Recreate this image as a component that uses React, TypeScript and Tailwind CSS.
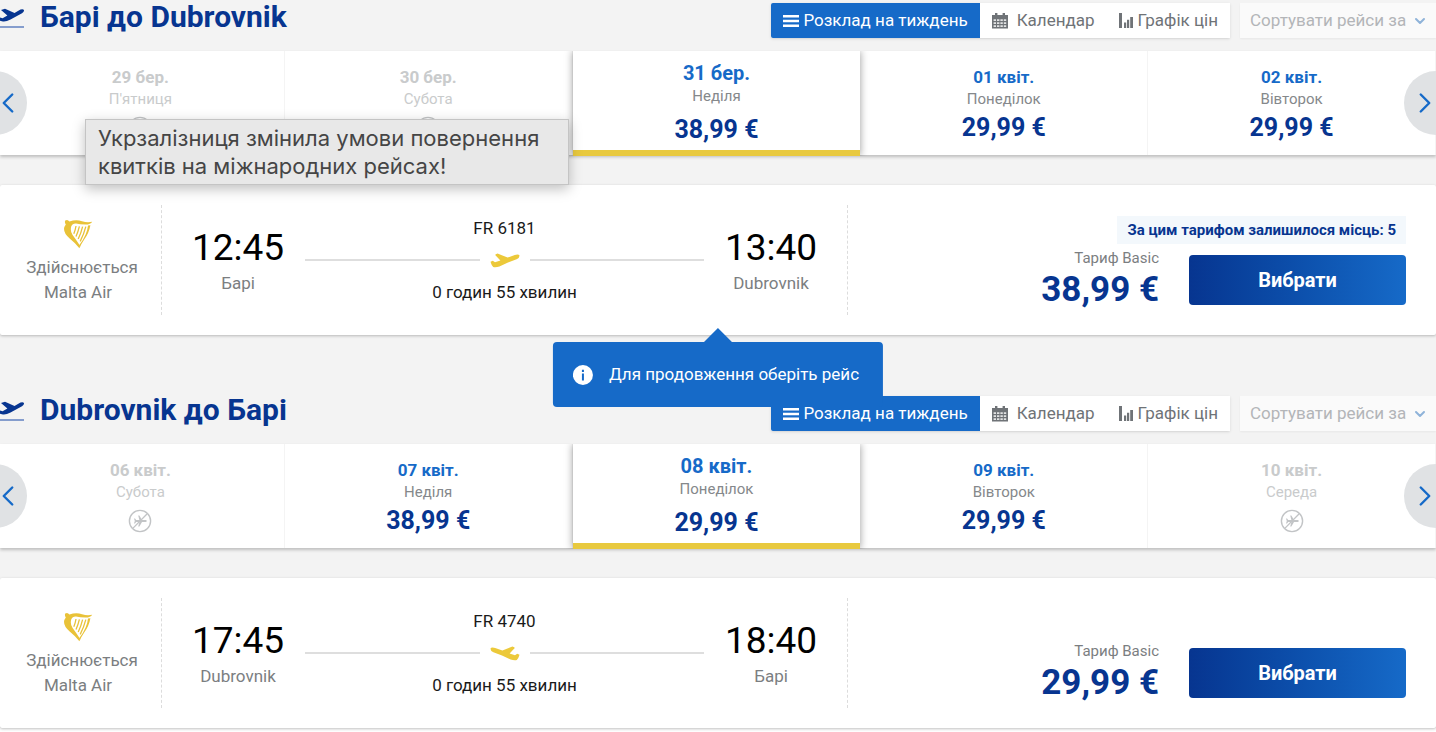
import { useState } from "react";
import { ChevronLeft, ChevronRight, ChevronDown } from "lucide-react";

interface Day {
  date: string;
  weekday: string;
  price?: string;
}

interface Flight {
  from: string;
  to: string;
  departure: string;
  arrival: string;
  number: string;
  duration: string;
  price: string;
  seatsLeft?: number;
  direction: "outbound" | "inbound";
}

const outboundDays: Day[] = [
  { date: "29 бер.", weekday: "П'ятниця" },
  { date: "30 бер.", weekday: "Субота" },
  { date: "31 бер.", weekday: "Неділя", price: "38,99 €" },
  { date: "01 квіт.", weekday: "Понеділок", price: "29,99 €" },
  { date: "02 квіт.", weekday: "Вівторок", price: "29,99 €" },
];

const inboundDays: Day[] = [
  { date: "06 квіт.", weekday: "Субота" },
  { date: "07 квіт.", weekday: "Неділя", price: "38,99 €" },
  { date: "08 квіт.", weekday: "Понеділок", price: "29,99 €" },
  { date: "09 квіт.", weekday: "Вівторок", price: "29,99 €" },
  { date: "10 квіт.", weekday: "Середа" },
];

const outboundFlight: Flight = {
  from: "Барі",
  to: "Dubrovnik",
  departure: "12:45",
  arrival: "13:40",
  number: "FR 6181",
  duration: "0 годин 55 хвилин",
  price: "38,99 €",
  seatsLeft: 5,
  direction: "outbound",
};

const inboundFlight: Flight = {
  from: "Dubrovnik",
  to: "Барі",
  departure: "17:45",
  arrival: "18:40",
  number: "FR 4740",
  duration: "0 годин 55 хвилин",
  price: "29,99 €",
  direction: "inbound",
};

function TakeoffIcon() {
  return (
    <svg viewBox="0 0 24 32" className="w-6 h-8 shrink-0" aria-hidden="true">
      <path
        d="M1 10 5 8.8 14.5 13 20.5 9.6Q23.4 8.8 24 10.2 24.2 11.8 22 13.2L10.5 19.6Q6 21.8 3 21.4L0 20.8V17.4L2.6 18.2 7.4 15.6Z"
        fill="#073590"
      />
      <path d="M0 27H24" stroke="#4a6fb8" strokeWidth="1.3" />
    </svg>
  );
}

function PlaneIcon({ flipped }: { flipped: boolean }) {
  return (
    <svg
      viewBox="0 0 30 15"
      className={`w-[30px] h-[15px] shrink-0 ${flipped ? "-scale-x-100" : ""}`}
      aria-hidden="true"
    >
      <path
        d="M.5 8.8 2.8 7.8 5 9.2 10.4 7.4 5.2 2.1Q5.2 1.2 7.6.6L17.6 4.6 24.8 2Q28.8 1 29.5 2.6 29.6 5 26.6 6.3L18 9.6 9.4 13.4Q6 14.6 3.2 14 1.6 12.8.5 8.8Z"
        fill="#ecc93a"
      />
    </svg>
  );
}

function HarpIcon() {
  return (
    <svg viewBox="0 0 30 30" className="w-[30px] h-[30px]" aria-hidden="true">
      <path
        d="M2.2 1.6Q4.6-.2 6.4 2.6 13 .2 19 2.2 24 4 29.2 2.8 27.6 5.6 22.6 5.6 17 5.4 13 4.4 9.4 4.2 8.2 7.4 7 12.4 9.6 16 13.8 21.6 17 26.8L16.4 29.2Q11 22.8 6.4 19.2 1 14.6 1 9.8 1.2 7.4 2.8 5.4 1.4 3.6 2.2 1.6Z"
        fill="#e9c238"
      />
      <path d="M27.4 6.2Q26 14 21.4 20.2 18.4 24.4 16.6 29L16 26.4Q20 21.4 22.6 15.4 24.6 11 25 6.6Z" fill="#e9c238" />
      <path
        d="M13 7Q12.4 11 10.8 14.8M16.4 7.4Q15.2 12.4 13 17.6M19.6 7.6Q18.2 13.6 15.2 20M22.8 7.6Q21 14.8 17.2 22.4"
        fill="none"
        stroke="#e9c238"
        strokeWidth="1.3"
      />
    </svg>
  );
}

function NoFlightIcon() {
  return (
    <svg viewBox="0 0 24 24" className="w-6 h-6" fill="none" stroke="#c2c4c6" aria-hidden="true">
      <circle cx="12" cy="12" r="10.6" strokeWidth="1.4" />
      <path d="M4.8 19.4 19.2 4.8" strokeWidth="1.3" />
      <path
        d="M18.8 12Q18.8 11 17.4 11H14L11.4 6.6H10.2L11.4 11H8.2L7 9.6H6L6.8 12 6 14.4H7L8.2 13H11.4L10.2 17.4H11.4L14 13H17.4Q18.8 13 18.8 12Z"
        fill="#c2c4c6"
        stroke="none"
      />
    </svg>
  );
}

function ListIcon() {
  return (
    <svg viewBox="0 0 16 14" className="w-4 h-[14px]" fill="currentColor" aria-hidden="true">
      <path d="M0 1h16v2.4H0zM0 5.8h16v2.4H0zM0 10.6h16V13H0z" />
    </svg>
  );
}

function CalendarIcon() {
  return (
    <svg viewBox="0 0 16 16" className="w-4 h-4" aria-hidden="true">
      <path d="M0 2H3V0H5.4V2H10.6V0H13V2H16V15.4H0Z" fill="currentColor" />
      <path
        d="M1.6 6.2h2.4v1.8H1.6zM5 6.2h2.4v1.8H5zM8.4 6.2h2.4v1.8H8.4zM11.8 6.2h2.4v1.8h-2.4zM1.6 9.2h2.4V11H1.6zM5 9.2h2.4V11H5zM8.4 9.2h2.4V11H8.4zM11.8 9.2h2.4V11h-2.4zM1.6 12.2h2.4V14H1.6zM5 12.2h2.4V14H5zM8.4 12.2h2.4V14H8.4zM11.8 12.2h2.4V14h-2.4z"
        fill="#fff"
        fillOpacity="0.8"
      />
    </svg>
  );
}

function ChartIcon() {
  return (
    <svg viewBox="0 0 14 15" className="w-[14px] h-[15px]" fill="currentColor" aria-hidden="true">
      <path d="M0 0h3v15H0zM5 9.4h2.2V15H5zM8 6.8h2.2V15H8zM11.2 4H14v11h-2.8z" />
    </svg>
  );
}

function JourneyHeader({ title }: { title: string }) {
  return (
    <div className="flex items-start h-[51px]">
      <TakeoffIcon />
      <h2 className="ml-4 text-[30px] leading-[34px] font-bold text-[#073590]">{title}</h2>
      <div className="ml-auto mt-[3px] flex h-[35px] text-[17px] text-[#6f7377]">
        <div className="flex shadow-sm">
          <button className="flex items-center gap-1 px-3 rounded-l-xs bg-[#166ac8] text-white">
            <ListIcon />
            Розклад на тиждень
          </button>
          <button className="flex items-center gap-[9px] px-3 bg-white">
            <CalendarIcon />
            Календар
          </button>
          <button className="flex items-center gap-[5px] px-3 bg-white">
            <ChartIcon />
            Графік цін
          </button>
        </div>
        <div className="relative ml-[10px] w-[196px] shadow-xs">
          <select
            aria-label="Сортувати рейси за"
            className="appearance-none w-full h-full pl-[10px] bg-[#fafafa] text-[#b3b5b8]"
          >
            <option>Сортувати рейси за</option>
          </select>
          <ChevronDown
            className="absolute right-2 top-[10px] w-4 h-4 text-[#8fb3d9] pointer-events-none"
            strokeWidth={3}
          />
        </div>
      </div>
    </div>
  );
}

function DayCell({ day, selected, onSelect }: { day: Day; selected: boolean; onSelect: () => void }) {
  if (selected) {
    return (
      <button
        onClick={onSelect}
        className="relative z-10 flex flex-col items-center pt-[10px] h-[105px] bg-white border-b-6 border-[#e8c93f] shadow-[0_0_8px_rgba(0,0,0,0.4)] [clip-path:inset(0_-12px_0_-12px)]"
      >
        <span className="mb-px text-xl leading-6 font-bold text-[#166ac8]">{day.date}</span>
        <span className="text-[15px] leading-5 text-[#85888b]">{day.weekday}</span>
        <span className="mt-[6px] text-[25px] leading-9 font-bold text-[#073590]">{day.price}</span>
      </button>
    );
  }

  return (
    <button
      onClick={onSelect}
      disabled={!day.price}
      className="flex flex-col items-center pt-[14px] h-[104px] border-r border-[#f4f4f4]"
    >
      <span className={`text-[17px] leading-6 font-bold ${day.price ? "text-[#166ac8]" : "text-[#c9cbcc]"}`}>
        {day.date}
      </span>
      <span className={`text-[15px] leading-5 ${day.price ? "text-[#85888b]" : "text-[#c9cbcc]"}`}>
        {day.weekday}
      </span>
      <span className="flex items-center h-[38px] text-[25px] font-bold text-[#073590]">
        {day.price ? day.price : <NoFlightIcon />}
      </span>
    </button>
  );
}

function DateCarousel({ days }: { days: Day[] }) {
  const [selected, setSelected] = useState(2);

  return (
    <div className="relative">
      <div className="overflow-x-clip bg-white shadow-[0_2px_3px_rgba(0,0,0,0.22)]">
        <div className="-ml-[3px] h-[104px] grid grid-cols-5">
          {days.map((day, index) => (
            <DayCell
              key={day.date}
              day={day}
              selected={index === selected}
              onSelect={() => setSelected(index)}
            />
          ))}
        </div>
      </div>
      <div className="absolute inset-0 flex items-center justify-between overflow-hidden pointer-events-none">
        <button
          aria-label="Попередні дні"
          className="-ml-[37px] flex items-center justify-end w-16 h-16 rounded-full bg-[#e0e2e4] text-[#166ac8] pointer-events-auto"
        >
          <ChevronLeft className="mr-[2px] w-[34px] h-[34px]" strokeWidth={1.7} />
        </button>
        <button
          aria-label="Наступні дні"
          className="-mr-8 flex items-center w-16 h-16 rounded-full bg-[#e0e2e4] text-[#166ac8] pointer-events-auto"
        >
          <ChevronRight className="ml-1 w-[34px] h-[34px]" strokeWidth={1.7} />
        </button>
      </div>
    </div>
  );
}

function TimePoint({ time, city }: { time: string; city: string }) {
  return (
    <div className="w-[134px] text-center">
      <div className="text-[37px] leading-[46px] text-black">{time}</div>
      <div className="text-[17px] leading-6 text-[#7b7e81]">{city}</div>
    </div>
  );
}

function FlightCard({ flight }: { flight: Flight }) {
  return (
    <article className="grid grid-cols-[162px_1fr_588px] h-[150px] bg-white rounded-xs shadow-[0_1px_3px_rgba(0,0,0,0.25)]">
      <div className="my-5 pt-[14px] border-r border-dashed border-[#dcdcdc]">
        <div className="ml-[26px] w-[104px] flex flex-col items-center text-[17px] leading-[25px] text-[#7b7e81]">
          <HarpIcon />
          <span className="mt-[6px] ml-2">Здійснюється</span>
          <span>Malta Air</span>
        </div>
      </div>

      <div className="my-5 px-[9px] flex items-center border-r border-dashed border-[#dcdcdc]">
        <TimePoint time={flight.departure} city={flight.from} />
        <div className="flex-1 text-center text-[17px] leading-6 text-[#1a1a1a]">
          <div>{flight.number}</div>
          <div className="flex items-center gap-[10px] h-10">
            <span className="flex-1 h-[2px] bg-[#dedede]" />
            <PlaneIcon flipped={flight.direction === "inbound"} />
            <span className="flex-1 h-[2px] bg-[#dedede]" />
          </div>
          <div>{flight.duration}</div>
        </div>
        <TimePoint time={flight.arrival} city={flight.to} />
      </div>

      <div className="flex flex-col items-end justify-end gap-1 pr-[30px] pb-[30px]">
        {flight.seatsLeft && (
          <div className="px-[10px] bg-[#f3f8fc] text-[15px] leading-7 font-bold text-[#073590]">
            За цим тарифом залишилося місць: {flight.seatsLeft}
          </div>
        )}
        <div className="flex items-end gap-[30px]">
          <div className="-mb-[5px] text-right">
            <div className="mb-[2px] text-[15px] leading-5 text-[#7b7e81]">Тариф Basic</div>
            <div className="text-[35px] leading-10 font-bold text-[#073590]">{flight.price}</div>
          </div>
          <button className="w-[217px] h-[50px] rounded-sm bg-linear-to-r from-[#073590] to-[#166ac8] text-xl font-bold text-white">
            Вибрати
          </button>
        </div>
      </div>
    </article>
  );
}

export default function App() {
  return (
    <div className="relative overflow-x-hidden pb-1 bg-white font-[Roboto,sans-serif]">
      <main className="bg-[#f3f3f3]">
        <section className="pb-[58px]">
          <JourneyHeader title="Барі до Dubrovnik" />
          <DateCarousel days={outboundDays} />
          <div className="relative mt-[30px]">
            <FlightCard flight={outboundFlight} />
            <div
              role="status"
              className="absolute z-20 top-[157px] left-1/2 -translate-x-1/2 flex items-center gap-4 h-[65px] pl-5 pr-6 rounded-sm bg-[#166ac8] text-[17px] text-white whitespace-nowrap"
            >
              <svg
                viewBox="0 0 28 14"
                className="absolute bottom-full left-1/2 -translate-x-1/2 w-7 h-[14px]"
                aria-hidden="true"
              >
                <path d="M0 14 14 0 28 14Z" fill="#166ac8" />
              </svg>
              <svg viewBox="0 0 20 20" className="w-5 h-5" aria-hidden="true">
                <circle cx="10" cy="10" r="10" fill="#fff" />
                <path d="M9 8.6h2V15.4H9zM9 4.8h2V7H9z" fill="#166ac8" />
              </svg>
              Для продовження оберіть рейс
            </div>
          </div>
        </section>

        <section>
          <JourneyHeader title="Dubrovnik до Барі" />
          <DateCarousel days={inboundDays} />
          <div className="mt-[30px]">
            <FlightCard flight={inboundFlight} />
          </div>
        </section>
      </main>

      <div
        role="tooltip"
        className="absolute z-30 top-[119px] left-[85px] w-[484px] px-3 py-1 border border-[#c4c4c4] bg-[#e8e8e8] shadow-[0_4px_12px_rgba(0,0,0,0.25)] font-[Inter,sans-serif] text-[22px] leading-7 text-[#454545]"
      >
        Укрзалізниця змінила умови повернення
        <br />
        квитків на міжнародних рейсах!
      </div>
    </div>
  );
}
